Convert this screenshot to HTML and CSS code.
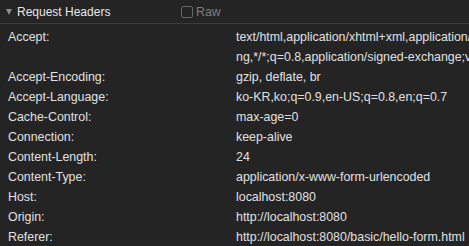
FILE: index.html
```html
<!DOCTYPE html>
<html lang="en">
<head>
    <meta charset="UTF-8">
    <title>Request Headers</title>
    <link rel="stylesheet" href="styles.css">
</head>
<body>
    <div class="panel">
        <div class="panel-header">
            <div class="title">
                <span class="caret"></span>
                Request Headers
            </div>
            <label class="raw">
                <span class="checkbox"></span>
                Raw
            </label>
        </div>

        <div class="headers">
            <div class="row">
                <div class="name">Accept:</div>
                <div class="value wrap">text/html,application/xhtml+xml,application/xml;q=0.9,image/avif,image/webp,image/apng,*/*;q=0.8,application/signed-exchange;v=b3;q=0.9</div>
            </div>
            <div class="row">
                <div class="name">Accept-Encoding:</div>
                <div class="value">gzip, deflate, br</div>
            </div>
            <div class="row">
                <div class="name">Accept-Language:</div>
                <div class="value">ko-KR,ko;q=0.9,en-US;q=0.8,en;q=0.7</div>
            </div>
            <div class="row">
                <div class="name">Cache-Control:</div>
                <div class="value">max-age=0</div>
            </div>
            <div class="row">
                <div class="name">Connection:</div>
                <div class="value">keep-alive</div>
            </div>
            <div class="row">
                <div class="name">Content-Length:</div>
                <div class="value">24</div>
            </div>
            <div class="row">
                <div class="name">Content-Type:</div>
                <div class="value">application/x-www-form-urlencoded</div>
            </div>
            <div class="row">
                <div class="name">Host:</div>
                <div class="value">localhost:8080</div>
            </div>
            <div class="row">
                <div class="name">Origin:</div>
                <div class="value">http://localhost:8080</div>
            </div>
            <div class="row">
                <div class="name">Referer:</div>
                <div class="value">http://localhost:8080/basic/hello-form.html</div>
            </div>
        </div>
    </div>
</body>
</html>
```

FILE: styles.css
```css
* {
    margin: 0;
    padding: 0;
    box-sizing: border-box;
}

body {
    font-family: 'Liberation Sans', Arial, sans-serif;
    background: #242424;
    color: #e0e0e0;
    width: 469px;
    height: 246px;
    overflow: hidden;
}

.panel {
    width: 720px;
}

.panel-header {
    height: 24px;
    display: flex;
    align-items: center;
    border-bottom: 1px solid #3c3c3c;
    padding-left: 6px;
}

.title {
    width: 175px;
    display: flex;
    align-items: center;
    gap: 5px;
    font-size: 12px;
    color: #e8e8e8;
}

.caret {
    width: 0;
    height: 0;
    border-left: 3.5px solid transparent;
    border-right: 3.5px solid transparent;
    border-top: 6px solid #8c8c8c;
    margin-top: 1px;
}

.raw {
    display: flex;
    align-items: center;
    gap: 3px;
    font-size: 12.4px;
    color: #7e7e7e;
}

.checkbox {
    width: 12px;
    height: 12px;
    border: 1px solid #676767;
    border-radius: 2px;
}

.headers {
    padding-top: 3px;
}

.row {
    display: flex;
    font-size: 12.4px;
    line-height: 20px;
}

.name {
    width: 236px;
    flex-shrink: 0;
    padding-left: 8px;
}

.value {
    width: 477px;
}

.wrap {
    word-break: break-all;
}
```
